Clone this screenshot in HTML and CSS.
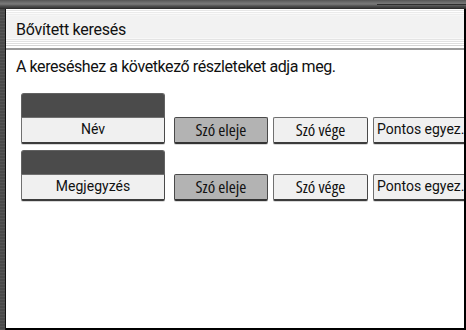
FILE: index.html
```html
<!DOCTYPE html>
<html lang="hu">
<head>
<meta charset="utf-8">
<title>Bővített keresés</title>
<link rel="stylesheet" href="styles.css">
</head>
<body>
<div class="screen">
  <div class="topbar"><span class="tabline"></span></div>
  <div class="frame">
    <div class="leftstrip"></div>
    <div class="content">
      <div class="title">Bővített keresés</div>
      <p class="intro">A kereséshez a következő részleteket adja meg.</p>
      <div class="rows">
        <div class="row">
          <div class="field">
            <div class="field-value"></div>
            <button class="btn field-name">Név</button>
          </div>
          <button class="btn btn-sel cond w94">Szó eleje</button>
          <button class="btn cond w95">Szó vége</button>
          <button class="btn exact">Pontos egyez.</button>
        </div>
        <div class="row">
          <div class="field">
            <div class="field-value"></div>
            <button class="btn field-name">Megjegyzés</button>
          </div>
          <button class="btn btn-sel cond w94">Szó eleje</button>
          <button class="btn cond w95">Szó vége</button>
          <button class="btn exact">Pontos egyez.</button>
        </div>
      </div>
    </div>
  </div>
</div>
</body>
</html>
```
FILE: styles.css
```css
* { box-sizing: border-box; }
html, body { margin: 0; padding: 0; background: #fff; }
body { font-family: Roboto, "Liberation Sans", sans-serif; color: #111; }

.screen {
  width: 466px;
  height: 330px;
  display: flex;
  flex-direction: column;
  overflow: hidden;
}

.topbar {
  position: relative;
  height: 9px;
  flex: none;
  background: linear-gradient(to bottom, #555 0, #6a6a6a 2px, #7a7a7a 4px, #505050 6px, #383838 8px, #262626 9px);
}
.tabline {
  position: absolute;
  left: 377px;
  right: 0;
  top: 4px;
  height: 1px;
  background: #2e2e2e;
}

.frame {
  flex: 1;
  display: flex;
  min-height: 0;
}

.leftstrip {
  width: 6px;
  flex: none;
  background: repeating-linear-gradient(to bottom, #4a4a4a 0 2px, #555 2px 3px);
  border-right: 1px solid #111;
}

.content {
  flex: 1;
  min-width: 0;
  background: #fff;
  border-right: 2px solid #000;
  border-bottom: 2px solid #000;
  overflow: hidden;
}

.title {
  height: 41px;
  padding: 11px 0 0 10px;
  font-size: 16px;
  line-height: 19px;
  letter-spacing: -0.25px;
  border-bottom: 2px solid #9a9a9a;
  background: linear-gradient(to bottom,
    #fff 0 1px, #e6e6e6 1px 2px, #fff 2px 3px, #ebebeb 3px 4px,
    #fbfbfb 4px 5px, #eeeeee 5px 6px, #f6f6f6 6px 7px,
    #f2f2f2 7px 29px,
    #f8f8f8 29px 30px, #e4e4e4 30px 31px, #fbfbfb 31px 32px,
    #e2e2e2 32px 33px, #fff 33px 34px, #dedede 34px 35px,
    #fff 35px 36px, #d4d4d4 36px 37px, #fff 37px 39px);
}

.intro {
  margin: 0;
  padding: 7px 0 0 10px;
  font-size: 16px;
  line-height: 19px;
  letter-spacing: -0.42px;
}

.rows {
  margin-top: 17px;
  padding-left: 15px;
  display: flex;
  flex-direction: column;
  gap: 6px;
}

.row {
  display: flex;
  align-items: flex-end;
  gap: 5px;
}

.field {
  width: 144px;
  flex: none;
  display: flex;
  flex-direction: column;
  margin-right: 4px;
}

.field-value {
  height: 24px;
  background: #4b4b4b;
  border: 1px solid #626262;
  border-bottom: none;
  border-radius: 3px 3px 0 0;
}

.btn {
  height: 27px;
  flex: none;
  margin: 0;
  padding: 0 0 3px;
  display: flex;
  align-items: center;
  justify-content: center;
  font-family: Roboto, "Liberation Sans", sans-serif;
  font-size: 14px;
  color: #111;
  background: #f0f0f0;
  border: 1px solid #707070;
  border-right-color: #4a4a4a;
  border-bottom: 2px solid #3c3c3c;
  border-radius: 2px;
  box-shadow: 0 1px 0 #d8d8d8;
  white-space: nowrap;
  overflow: hidden;
}

.field-name {
  width: 144px;
  border-radius: 0 0 2px 2px;
}

.btn-sel {
  background: #b3b3b3;
  border-color: #4a4a4a;
  border-bottom-color: #333;
}

.cond {
  font-family: "Open Sans", Roboto, sans-serif;
  font-stretch: 75%;
  font-size: 17px;
  padding-bottom: 1px;
}

.w94 { width: 94px; }
.w95 { width: 95px; }

.exact {
  width: 96px;
  justify-content: flex-start;
  padding-left: 3px;
}
```
